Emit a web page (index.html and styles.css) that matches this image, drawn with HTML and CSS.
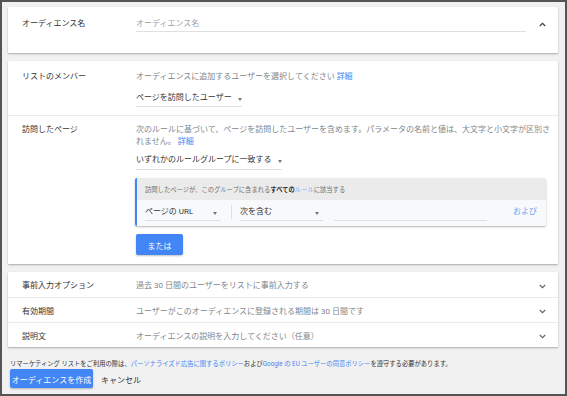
FILE: index.html
```html
<!DOCTYPE html>
<html lang="ja">
<head>
    <meta charset="UTF-8">
    <meta name="viewport" content="width=device-width, initial-scale=1.0">
    <title>オーディエンスの作成</title>
    <link rel="stylesheet" href="styles.css">
</head>
<body>
    <div class="page">
        <!-- Audience name -->
        <section class="card">
            <div class="name-row">
                <div class="label">オーディエンス名</div>
                <div class="field">
                    <div class="text-input">オーディエンス名</div>
                </div>
                <div class="toggle">
                    <svg width="7" height="5" viewBox="0 0 7 5"><path d="M0.8 4 L3.5 1.3 L6.2 4" fill="none" stroke="#444" stroke-width="1.3"/></svg>
                </div>
            </div>
        </section>

        <!-- Members + rules -->
        <section class="card">
            <div class="section">
                <div class="label">リストのメンバー</div>
                <div class="field">
                    <p class="desc">オーディエンスに追加するユーザーを選択してください <a class="link">詳細</a></p>
                    <div class="dropdown members-select">
                        <span>ページを訪問したユーザー</span>
                        <span class="caret"></span>
                    </div>
                </div>
            </div>
            <div class="section">
                <div class="label">訪問したページ</div>
                <div class="field">
                    <p class="desc wide">次のルールに基づいて、ページを訪問したユーザーを含めます。パラメータの名前と値は、大文字と小文字が区別されません。 <a class="link">詳細</a></p>
                    <div class="dropdown match-select">
                        <span>いずれかのルールグループに一致する</span>
                        <span class="caret"></span>
                    </div>

                    <div class="rule-group">
                        <div class="rule-head">訪問したページが、このグループに含まれる<b>すべての</b><span class="rule-word">ルール</span>に該当する</div>
                        <div class="rule-body">
                            <div class="select url-select">
                                <span>ページの URL</span>
                                <span class="caret"></span>
                            </div>
                            <div class="divider"></div>
                            <div class="select op-select">
                                <span>次を含む</span>
                                <span class="caret"></span>
                            </div>
                            <div class="value-input"></div>
                            <a class="link and-link">および</a>
                        </div>
                    </div>

                    <button class="btn btn-primary or-btn">または</button>
                </div>
            </div>
        </section>

        <!-- Collapsed options -->
        <section class="card">
            <div class="option-row">
                <div class="label">事前入力オプション</div>
                <div class="option-value">過去 30 日間のユーザーをリストに事前入力する</div>
                <div class="toggle">
                    <svg width="7" height="5" viewBox="0 0 7 5"><path d="M0.8 1 L3.5 3.7 L6.2 1" fill="none" stroke="#666" stroke-width="1.2"/></svg>
                </div>
            </div>
            <div class="option-row">
                <div class="label">有効期間</div>
                <div class="option-value">ユーザーがこのオーディエンスに登録される期間は 30 日間です</div>
                <div class="toggle">
                    <svg width="7" height="5" viewBox="0 0 7 5"><path d="M0.8 1 L3.5 3.7 L6.2 1" fill="none" stroke="#666" stroke-width="1.2"/></svg>
                </div>
            </div>
            <div class="option-row">
                <div class="label">説明文</div>
                <div class="option-value">オーディエンスの説明を入力してください（任意）</div>
                <div class="toggle">
                    <svg width="7" height="5" viewBox="0 0 7 5"><path d="M0.8 1 L3.5 3.7 L6.2 1" fill="none" stroke="#666" stroke-width="1.2"/></svg>
                </div>
            </div>
        </section>

        <p class="notice">リマーケティング リストをご利用の際は、<a class="link">パーソナライズド広告に関するポリシー</a>および<a class="link">Google の EU ユーザーの同意ポリシー</a>を遵守する必要があります。</p>

        <div class="actions">
            <button class="btn btn-primary create-btn">オーディエンスを作成</button>
            <button class="btn btn-text">キャンセル</button>
        </div>
    </div>
</body>
</html>
```

FILE: styles.css
```css
* {
    margin: 0;
    padding: 0;
    box-sizing: border-box;
}

body {
    font-family: Roboto, "Noto Sans CJK JP", sans-serif;
    font-size: 8px;
    line-height: 12px;
    color: #333;
    background: #f1f1f1;
}

.page {
    height: 396px;
    border: 2px solid #555;
    padding: 5px 7px 0 6px;
    overflow: hidden;
}

.card {
    background: #fff;
    border-radius: 1px;
    box-shadow: 0 1px 2px rgba(0, 0, 0, 0.3);
    margin-bottom: 8px;
}

.label {
    width: 114px;
    flex: none;
    color: #333;
}

.field {
    flex: 1;
    min-width: 0;
}

.link {
    color: #4285f4;
    text-decoration: none;
}

.toggle {
    width: 32px;
    flex: none;
    display: flex;
    justify-content: center;
    align-items: center;
}

/* Audience name */
.name-row {
    display: flex;
    align-items: flex-start;
    height: 46px;
    padding: 11px 0 0 14px;
}

.name-row .toggle {
    height: 12px;
}

.text-input {
    color: #9aa0a6;
    padding-bottom: 1px;
    border-bottom: 1px solid #e0e0e0;
}

/* Members / rules */
.section {
    display: flex;
    padding: 10px 12px 8px 14px;
}

.section + .section {
    border-top: 1px solid #ebebeb;
    padding-top: 8px;
    padding-bottom: 9px;
}

.desc {
    color: #80868b;
}

.desc.wide {
    margin-right: -4px;
}

.dropdown {
    display: inline-flex;
    align-items: center;
    gap: 6px;
    border-bottom: 1px solid #e0e0e0;
    color: #333;
}

.members-select {
    margin-top: 9px;
    padding-bottom: 2px;
}

.match-select {
    margin-top: 6px;
    padding-bottom: 3px;
}

.caret {
    width: 0;
    height: 0;
    margin-top: 2px;
    border-left: 2.5px solid transparent;
    border-right: 2.5px solid transparent;
    border-top: 3px solid #757575;
}

.rule-group {
    margin-top: 8px;
    margin-left: -1px;
    border-left: 2px solid #4285f4;
    border-radius: 2px;
    box-shadow: 0 1px 2px rgba(0, 0, 0, 0.3);
    overflow: hidden;
}

.rule-head {
    height: 22px;
    display: flex;
    align-items: center;
    padding: 1px 0 0 8px;
    background: #ebebeb;
    font-size: 6.3px;
    color: #6f6f6f;
}

.rule-head b {
    color: #333;
}

.rule-word {
    color: #7fa8f0;
}

.rule-body {
    height: 26px;
    display: flex;
    align-items: flex-start;
    padding: 6px 9px 0 8px;
    background: #f8f9fa;
}

.select {
    display: flex;
    align-items: center;
    justify-content: space-between;
    padding: 0 4px 2px 0;
    border-bottom: 1px solid #e0e0e0;
    color: #333;
}

.url-select {
    width: 76px;
}

.op-select {
    width: 83px;
}

.divider {
    width: 1px;
    height: 14px;
    margin: -1px 8px 0 10px;
    background: #e0e0e0;
}

.value-input {
    width: 153px;
    height: 15px;
    margin-left: 11px;
    border-bottom: 1px solid #e0e0e0;
}

.and-link {
    margin-left: auto;
    color: #6b9ef5;
}

.btn {
    font-family: inherit;
    font-size: 8px;
    border: none;
    background: none;
    cursor: pointer;
}

.btn-primary {
    background: #4285f4;
    color: #fff;
    border-radius: 2px;
    box-shadow: 0 1px 2px rgba(0, 0, 0, 0.25);
    padding-top: 2px;
}

.or-btn {
    display: block;
    width: 47px;
    height: 21px;
    margin-top: 8px;
}

/* Collapsed options */
.option-row {
    display: flex;
    align-items: center;
    height: 25px;
    padding: 3px 0 0 14px;
}

.option-row + .option-row {
    border-top: 1px solid #ebebeb;
}

.option-value {
    flex: 1;
    color: #80868b;
}

/* Footer */
.notice {
    margin-top: 12px;
    padding-left: 2px;
    font-size: 6.3px;
    line-height: 10px;
    color: #333;
    white-space: nowrap;
}

.actions {
    display: flex;
    align-items: center;
    gap: 8px;
    margin-top: 0;
    padding-left: 2px;
}

.create-btn {
    width: 83px;
    height: 19px;
}

.btn-text {
    color: #333;
    padding-top: 2px;
}
```
